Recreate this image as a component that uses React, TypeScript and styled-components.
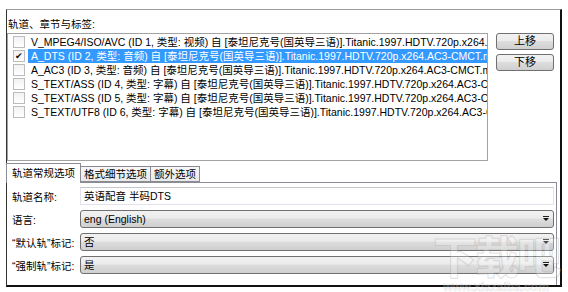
import styled, { createGlobalStyle } from 'styled-components';

//global
const GlobalStyle = createGlobalStyle`
  html, body {
    margin: 0;
    padding: 0;
    background: #fff;
  }
  body {
    font-family: 'Liberation Sans', 'Noto Sans CJK SC', sans-serif;
    font-size: 10px;
    color: #000;
  }
`;

//type
interface Track {
  checked: boolean;
  text: string;
}

//data
const tracks: Track[] = [
  { checked: false, text: 'V_MPEG4/ISO/AVC (ID 1, 类型: 视频) 自 [泰坦尼克号(国英导三语)].Titanic.1997.HDTV.720p.x264..' },
  { checked: true, text: 'A_DTS (ID 2, 类型: 音频) 自 [泰坦尼克号(国英导三语)].Titanic.1997.HDTV.720p.x264.AC3-CMCT.mkv' },
  { checked: false, text: 'A_AC3 (ID 3, 类型: 音频) 自 [泰坦尼克号(国英导三语)].Titanic.1997.HDTV.720p.x264.AC3-CMCT.mkv' },
  { checked: false, text: 'S_TEXT/ASS (ID 4, 类型: 字幕) 自 [泰坦尼克号(国英导三语)].Titanic.1997.HDTV.720p.x264.AC3-CMCT.mkv' },
  { checked: false, text: 'S_TEXT/ASS (ID 5, 类型: 字幕) 自 [泰坦尼克号(国英导三语)].Titanic.1997.HDTV.720p.x264.AC3-CMCT.mkv' },
  { checked: false, text: 'S_TEXT/UTF8 (ID 6, 类型: 字幕) 自 [泰坦尼克号(国英导三语)].Titanic.1997.HDTV.720p.x264.AC3-CMCT.mkv' },
];

//styled component
const Page = styled.div`
  position: relative;
  width: 568px;
  height: 292px;
  overflow: hidden;
  padding-top: 9px;
  box-sizing: border-box;
`;

const Window = styled.div`
  margin-left: 6px;
  width: 556px;
  height: 278px;
  box-sizing: border-box;
  border-top: 1px solid #9c9c9c;
  border-left: 1px solid #333;
  border-right: 2px solid #111;
  border-bottom: 2px solid #111;
  display: flex;
  flex-direction: column;
`;

const Heading = styled.div`
  height: 16px;
  line-height: 16px;
  margin: 6px 0 1px 1px;
  font-size: 10.5px;
`;

const TopRow = styled.div`
  display: flex;
  gap: 8px;
`;

const ListBox = styled.div`
  width: 481px;
  height: 128px;
  box-sizing: border-box;
  border: 1px solid #a3a3a3;
  background: #fff;
  padding-top: 1px;
  overflow: hidden;
`;

const Row = styled.div`
  display: flex;
  align-items: center;
  height: 14px;
`;

const Check = styled.span`
  flex: none;
  width: 12px;
  height: 12px;
  box-sizing: border-box;
  margin: 0 3px 0 5px;
  border: 1px solid #bcbcbc;
  background: linear-gradient(#f2f2f2, #fff);
  display: flex;
  align-items: center;
  justify-content: center;
  font-size: 9px;
  line-height: 1;
  color: #111;
`;

const RowText = styled.span<{ $selected: boolean }>`
  flex: 1;
  min-width: 0;
  height: 14px;
  line-height: 14px;
  padding-left: 3px;
  font-size: 10.5px;
  white-space: nowrap;
  overflow: hidden;
  background: ${(p) => (p.$selected ? '#3399ff' : 'transparent')};
  color: ${(p) => (p.$selected ? '#fff' : '#000')};
`;

const ButtonColumn = styled.div`
  display: flex;
  flex-direction: column;
  gap: 4px;
`;

const MoveButton = styled.button`
  width: 58px;
  height: 17px;
  padding: 0;
  border: 1px solid #707070;
  border-radius: 3px;
  background: linear-gradient(#f2f2f2 0%, #ebebeb 45%, #dddddd 50%, #cfcfcf 100%);
  font-family: 'Liberation Sans', 'Noto Sans CJK SC', sans-serif;
  font-size: 11px;
  line-height: 15px;
  color: #000;
`;

const TabBar = styled.div`
  display: flex;
  align-items: flex-end;
  height: 20px;
  margin-top: 1px;
`;

const Tab = styled.div<{ $active?: boolean }>`
  box-sizing: border-box;
  height: ${(p) => (p.$active ? '20px' : '16px')};
  padding: 0 ${(p) => (p.$active ? '5px' : '3px')};
  border: 1px solid #898c95;
  border-bottom: ${(p) => (p.$active ? 'none' : '1px solid #898c95')};
  margin-left: -1px;
  margin-bottom: ${(p) => (p.$active ? '-1px' : '0')};
  background: ${(p) => (p.$active ? '#fff' : 'linear-gradient(#f7f7f7, #e9e9e9)')};
  line-height: ${(p) => (p.$active ? '18px' : '14px')};
  font-size: 10.5px;
  white-space: nowrap;
  position: relative;
  z-index: ${(p) => (p.$active ? 1 : 0)};
`;

const Panel = styled.div`
  flex: 1;
  width: 550px;
  box-sizing: border-box;
  border-top: 1px solid #898c95;
  border-right: 1px solid #898c95;
  padding: 4px 2px 0 5px;
  display: grid;
  grid-template-columns: 68px 1fr;
  grid-auto-rows: 18px;
  row-gap: 5px;
  align-items: center;
`;

const FieldLabel = styled.label`
  font-size: 10.5px;
  white-space: nowrap;
`;

const TextField = styled.div`
  height: 18px;
  box-sizing: border-box;
  border: 1px solid #e2e3ea;
  border-top-color: #c4c6cc;
  background: #fff;
  padding-left: 3px;
  line-height: 16px;
  font-size: 10.5px;
`;

const Combo = styled.div`
  position: relative;
  height: 18px;
  box-sizing: border-box;
  border: 1px solid #707070;
  border-radius: 3px;
  background: linear-gradient(#f2f2f2 0%, #ebebeb 45%, #dddddd 50%, #cfcfcf 100%);
  padding-left: 3px;
  line-height: 16px;
  font-size: 10.5px;
`;

const Arrow = styled.span`
  position: absolute;
  right: 4px;
  top: 7px;
  width: 0;
  height: 0;
  border-left: 3px solid transparent;
  border-right: 3px solid transparent;
  border-top: 3px solid #111;
  &::before {
    content: '';
    position: absolute;
    left: -3px;
    top: -5px;
    width: 6px;
    height: 1px;
    background: #222;
  }
`;

const Watermark = styled.div`
  position: absolute;
  left: 428px;
  top: 229px;
  width: 136px;
  text-align: center;
  color: rgba(255, 255, 255, 0.25);
  -webkit-text-stroke: 1px rgba(150, 150, 150, 0.3);
  pointer-events: none;
  & .big {
    font-family: 'Noto Sans CJK SC', sans-serif;
    font-weight: 900;
    font-size: 44px;
    line-height: 52px;
    letter-spacing: -2px;
  }
  & .small {
    font-family: 'Liberation Sans', sans-serif;
    font-weight: bold;
    font-size: 12px;
    line-height: 12px;
    -webkit-text-stroke: 0.6px rgba(150, 150, 150, 0.3);
  }
`;

function App() {
  return (
    <Page>
      <GlobalStyle />
      <Window>
        <Heading>轨道、章节与标签:</Heading>
        <TopRow>
          <ListBox>
            {tracks.map((t, i) => (
              <Row key={i}>
                <Check>{t.checked ? '✔' : ''}</Check>
                <RowText $selected={i === 1}>{t.text}</RowText>
              </Row>
            ))}
          </ListBox>
          <ButtonColumn>
            <MoveButton>上移</MoveButton>
            <MoveButton>下移</MoveButton>
          </ButtonColumn>
        </TopRow>
        <TabBar>
          <Tab $active>轨道常规选项</Tab>
          <Tab>格式细节选项</Tab>
          <Tab>额外选项</Tab>
        </TabBar>
        <Panel>
          <FieldLabel>轨道名称:</FieldLabel>
          <TextField>英语配音 半码DTS</TextField>
          <FieldLabel>语言:</FieldLabel>
          <Combo>
            eng (English)
            <Arrow />
          </Combo>
          <FieldLabel>“默认轨”标记:</FieldLabel>
          <Combo>
            否
            <Arrow />
          </Combo>
          <FieldLabel>“强制轨”标记:</FieldLabel>
          <Combo>
            是
            <Arrow />
          </Combo>
        </Panel>
      </Window>
      <Watermark>
        <div className="big">下载吧</div>
        <div className="small">www.xiazaiba.com</div>
      </Watermark>
    </Page>
  );
}

export default App;
